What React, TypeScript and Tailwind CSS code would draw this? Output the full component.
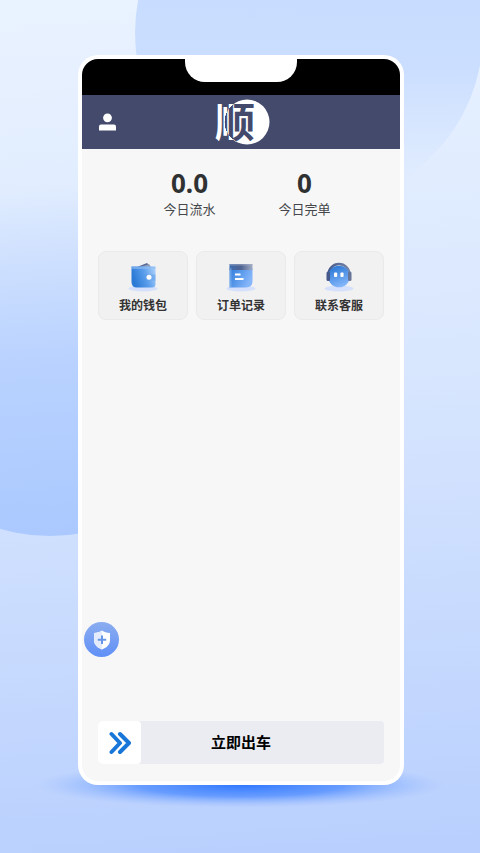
import type { ReactNode } from "react";

function Backdrop() {
  return (
    <svg
      className="absolute inset-0 h-full w-full"
      viewBox="0 0 480 853"
      preserveAspectRatio="xMidYMid slice"
      aria-hidden="true"
    >
      <defs>
        <linearGradient id="sky" gradientUnits="userSpaceOnUse" x1="210" y1="0" x2="270" y2="853">
          <stop offset="0" stopColor="#e9f2ff" />
          <stop offset="0.45" stopColor="#d8e6fe" />
          <stop offset="1" stopColor="#b9d0fe" />
        </linearGradient>
        <linearGradient id="discTop" x1="0" y1="0" x2="0" y2="1">
          <stop offset="0.3" stopColor="#c6dbff" />
          <stop offset="0.6" stopColor="#c6dbff" stopOpacity="0.85" />
          <stop offset="0.92" stopColor="#c6dbff" stopOpacity="0" />
        </linearGradient>
        <linearGradient id="discLeft" x1="0.45" y1="0" x2="0.52" y2="1">
          <stop offset="0" stopColor="#a9c8ff" stopOpacity="0" />
          <stop offset="0.5" stopColor="#aecbff" stopOpacity="0.75" />
          <stop offset="1" stopColor="#abc9ff" />
        </linearGradient>
        <radialGradient id="glow">
          <stop offset="0" stopColor="#2f78ff" />
          <stop offset="0.5" stopColor="#4b8aff" stopOpacity="0.75" />
          <stop offset="1" stopColor="#8fb4ff" stopOpacity="0" />
        </radialGradient>
      </defs>
      <rect width="480" height="853" fill="url(#sky)" />
      <circle cx="309" cy="33" r="174" fill="url(#discTop)" />
      <circle cx="50" cy="362" r="174" fill="url(#discLeft)" />
      <ellipse cx="241" cy="785" rx="205" ry="23" fill="url(#glow)" />
    </svg>
  );
}

function Logo() {
  return (
    <svg width="60" height="54" viewBox="0 0 60 54" role="img" aria-label="顺" className="overflow-visible">
      <defs>
        {/* dark inside the disc, white where the character sticks out of it */}
        <radialGradient id="logoInk" gradientUnits="userSpaceOnUse" cx="36" cy="27" r="23">
          <stop offset="0.97" stopColor="#434a6b" />
          <stop offset="0.98" stopColor="#ffffff" />
        </radialGradient>
      </defs>
      <circle cx="36" cy="27" r="22.5" fill="#ffffff" />
      <text
        x="24"
        y="42"
        textAnchor="middle"
        fill="url(#logoInk)"
        className="font-['Noto_Sans_CJK_SC',sans-serif] text-[40px] font-bold"
      >
        顺
      </text>
    </svg>
  );
}

function PersonIcon() {
  return (
    <svg width="18" height="20" viewBox="0 0 18 20" fill="#ffffff" aria-hidden="true">
      <circle cx="9.5" cy="5.8" r="4.4" />
      <path d="M1 18.4V14.4Q1 12.6 3 12.4H16Q18 12.6 18 14.4V18.4Z" />
    </svg>
  );
}

function WalletIcon() {
  return (
    <svg width="30" height="30" viewBox="0 0 30 30" aria-hidden="true">
      <defs>
        <linearGradient id="wallet" x1="0" y1="0.3" x2="1" y2="0">
          <stop offset="0" stopColor="#2b7ad6" />
          <stop offset="0.5" stopColor="#5c9fec" />
          <stop offset="1" stopColor="#b4d5fb" />
        </linearGradient>
      </defs>
      <ellipse cx="15" cy="26.5" rx="14.5" ry="3" fill="#d5e0fc" />
      <path d="M9 5L19 1L23 5Z" fill="#596c98" />
      <path d="M13 5L21 2L23 5Z" fill="#8d9bb8" />
      <path d="M3.5 4.5H27.5V22Q27.5 25.5 24 25.5H9Q3.5 25.5 3.5 20Z" fill="url(#wallet)" />
      <path d="M3.5 4.5H27.5V7H3.5Z" fill="#8fbcf2" fillOpacity="0.6" />
      <path d="M19 12.5H27.5V18.5H20Q17 18.5 17 15.5T19 12.5Z" fill="#5f9fea" fillOpacity="0.5" />
      <circle cx="21" cy="15.3" r="2.5" fill="#ffffff" />
    </svg>
  );
}

function OrdersIcon() {
  return (
    <svg width="30" height="30" viewBox="0 0 30 30" aria-hidden="true">
      <defs>
        <linearGradient id="sheet" x1="0" y1="0" x2="1" y2="0.4">
          <stop offset="0" stopColor="#2d7cdb" />
          <stop offset="1" stopColor="#86b6fa" />
        </linearGradient>
        <linearGradient id="sheetTop" x1="0" y1="0" x2="1" y2="0">
          <stop offset="0" stopColor="#3d6cae" />
          <stop offset="0.5" stopColor="#4f6391" />
          <stop offset="1" stopColor="#a2adc4" />
        </linearGradient>
      </defs>
      <ellipse cx="15" cy="26.5" rx="14.5" ry="3" fill="#d5e0fc" />
      <path d="M3.5 6H26.5V19Q26.5 25.5 20 25.5H3.5Z" fill="url(#sheet)" />
      <path d="M3.5 2H26.5V8H3.5Z" fill="url(#sheetTop)" />
      <path d="M3.5 2H26.5V3.5H3.5Z" fill="#a8b2c9" fillOpacity="0.5" />
      <path d="M3.5 6V25.5H5.5V6Z" fill="#a9cbf6" fillOpacity="0.4" />
      <path d="M9 12.5H14.5M9 17H17.5" stroke="#ffffff" strokeWidth="2.2" />
    </svg>
  );
}

function SupportIcon() {
  return (
    <svg width="30" height="30" viewBox="0 0 30 30" aria-hidden="true">
      <defs>
        <linearGradient id="head" x1="0.3" y1="0" x2="0.7" y2="1">
          <stop offset="0" stopColor="#2a78d5" />
          <stop offset="1" stopColor="#8abafd" />
        </linearGradient>
        <linearGradient id="band" x1="0" y1="0" x2="1" y2="0">
          <stop offset="0" stopColor="#44598b" />
          <stop offset="1" stopColor="#7886a8" />
        </linearGradient>
      </defs>
      <ellipse cx="15" cy="26.5" rx="14.5" ry="3" fill="#d5e0fc" />
      <path d="M4.5 14V12.5A10.5 10.5 0 0 1 25.5 12.5V14" fill="none" stroke="url(#band)" strokeWidth="2.4" />
      <circle cx="15" cy="14.5" r="10.8" fill="url(#head)" />
      <rect x="2.5" y="9.5" width="3.5" height="9.5" rx="1.5" fill="#45598a" />
      <rect x="24" y="9.5" width="3.5" height="9.5" rx="1.5" fill="#667498" />
      <rect x="10" y="10.5" width="3.2" height="4.4" rx="1" fill="#ffffff" />
      <rect x="16.4" y="10.5" width="3.2" height="4.4" rx="1" fill="#ffffff" />
    </svg>
  );
}

function ShieldIcon() {
  return (
    <svg width="18" height="20" viewBox="0 0 18 20" aria-hidden="true">
      <path d="M9 0.5C11 2 14 3 17 3V10C17 15 13 18 9 19.5C5 18 1 15 1 10V3C4 3 7 2 9 0.5Z" fill="#ffffff" />
      <path d="M9 0.5C7 2 4 3 1 3V10C1 15 5 18 9 19.5Z" fill="#e3ebfd" />
      <path d="M9 5.5V14M4.8 9.8H13.2" stroke="#6796e6" strokeWidth="2" />
    </svg>
  );
}

function Stat({ label, value }: { label: string; value: string }) {
  return (
    <div className="flex flex-col items-center">
      <div className="font-['Noto_Sans',sans-serif] text-[26px] font-bold leading-8 text-[#2f3133]">{value}</div>
      <div className="text-[13px] leading-5 text-[#45474a]">{label}</div>
    </div>
  );
}

const shortcuts: { label: string; icon: ReactNode }[] = [
  { label: "我的钱包", icon: <WalletIcon /> },
  { label: "订单记录", icon: <OrdersIcon /> },
  { label: "联系客服", icon: <SupportIcon /> },
];

export default function App() {
  return (
    <div className="relative flex min-h-screen flex-col overflow-hidden pt-[55px] pr-[76px] pb-[68px] pl-[78px] font-['Noto_Sans_CJK_SC',sans-serif]">
      <Backdrop />

      {/* Phone */}
      <div className="relative flex flex-1 flex-col overflow-hidden rounded-[20px] bg-white p-1">
        <div className="flex flex-1 flex-col overflow-hidden rounded-2xl bg-[#f7f7f7]">
          <div className="flex h-9 justify-center bg-black">
            <div className="h-[23px] w-28 rounded-b-[20px] bg-white" />
          </div>

          <header className="grid h-[54px] grid-cols-[1fr_auto_1fr] items-center bg-[#434a6b] px-4">
            <button type="button" aria-label="个人中心" className="w-fit">
              <PersonIcon />
            </button>
            <Logo />
          </header>

          <main className="flex flex-1 flex-col px-4 pb-[17px]">
            <div className="flex justify-center gap-[63px] pt-[18px] pl-3">
              <Stat label="今日流水" value="0.0" />
              <Stat label="今日完单" value="0" />
            </div>

            {/* Shortcuts */}
            <div className="mt-8 grid grid-cols-3 gap-2">
              {shortcuts.map((s) => (
                <button
                  key={s.label}
                  type="button"
                  className="flex h-[69px] flex-col items-center rounded-lg border border-[#e9eaec] bg-[#f1f1f1] pt-[10px]"
                >
                  {s.icon}
                  <span className="text-xs font-bold leading-[26px] text-[#333333]">{s.label}</span>
                </button>
              ))}
            </div>

            {/* Go online */}
            <button
              type="button"
              className="mt-auto grid h-[43px] grid-cols-[43px_1fr_43px] items-center overflow-hidden rounded bg-[#ebecf2]"
            >
              <span className="flex h-full items-center justify-center rounded bg-white">
                <svg width="22" height="24" viewBox="0 0 22 24" fill="none" aria-hidden="true">
                  <path
                    d="M2.5 3L11 12L2.5 21M11 3L20 12L11 21"
                    stroke="#1976d9"
                    strokeWidth="4"
                    strokeLinecap="round"
                    strokeLinejoin="round"
                  />
                </svg>
              </span>
              <span className="text-[15px] font-bold text-black">立即出车</span>
            </button>
          </main>
        </div>

        {/* Safety centre */}
        <button
          type="button"
          aria-label="安全中心"
          className="absolute bottom-32 left-[6px] flex size-[35px] items-center justify-center rounded-full bg-linear-to-b from-[#8bacef] to-[#6090f7]"
        >
          <ShieldIcon />
        </button>
      </div>
    </div>
  );
}
